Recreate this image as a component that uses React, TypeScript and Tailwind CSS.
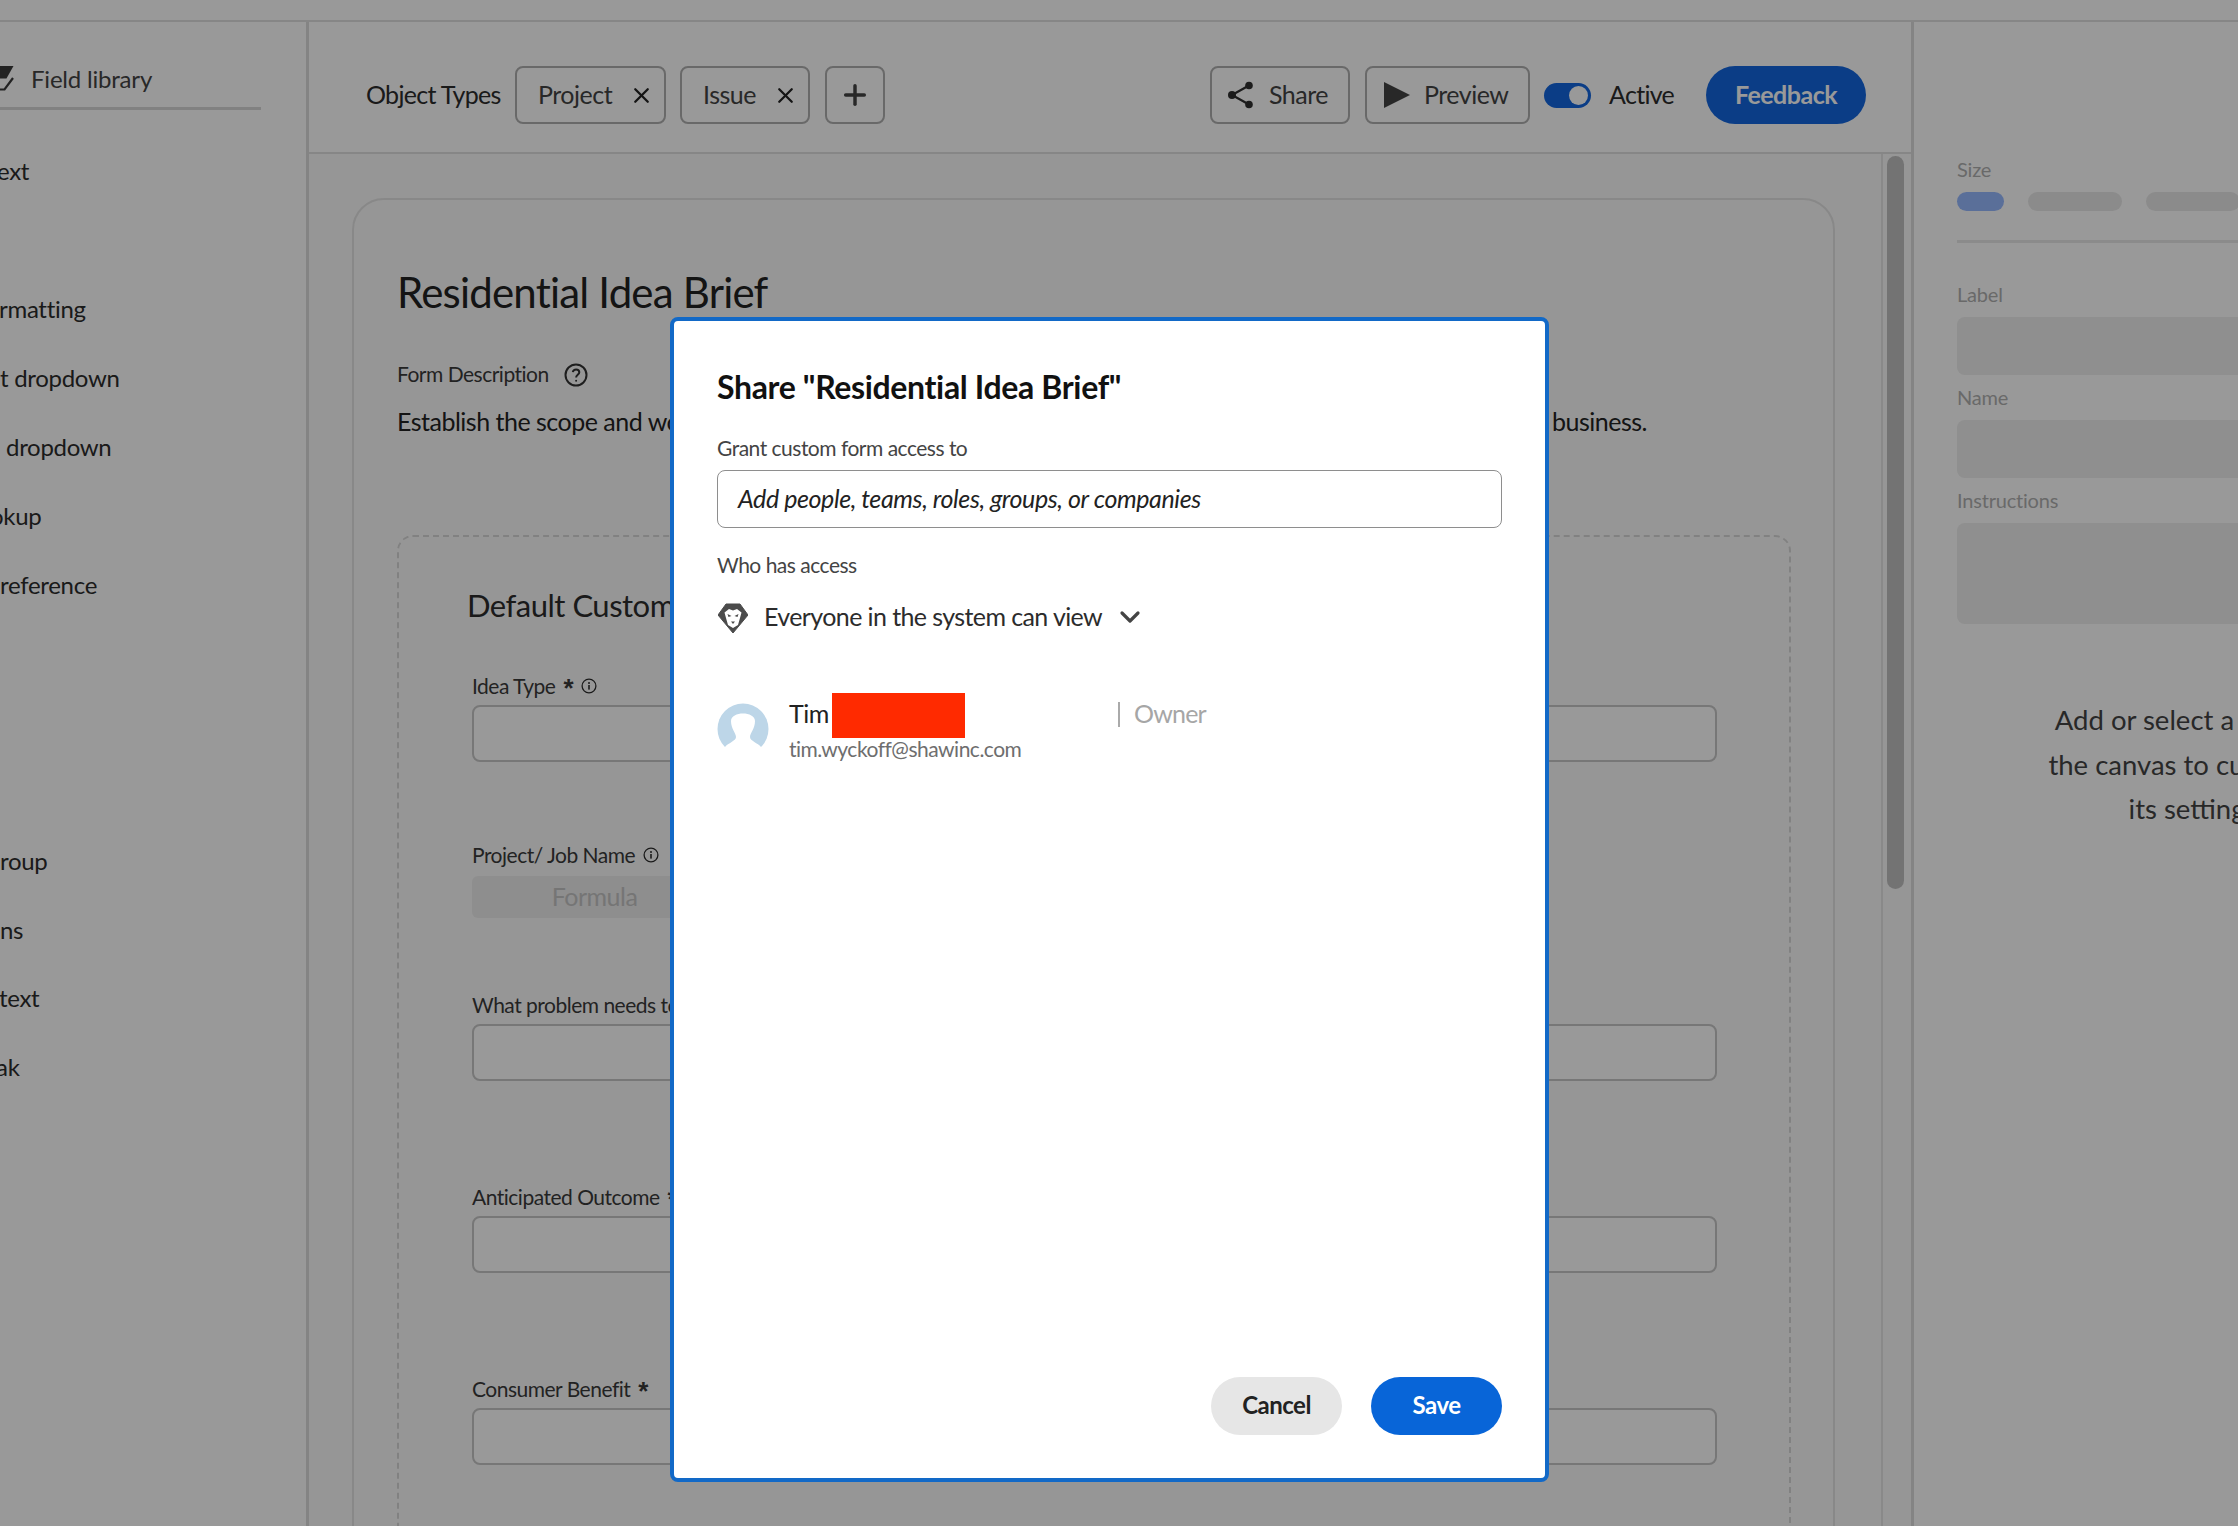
import React from "react";
import { X, Plus, ChevronDown } from "lucide-react";

function InfoIcon() {
  return (
    <svg viewBox="0 0 16 16" className="w-[16px] h-[16px] shrink-0">
      <circle cx="8" cy="8" r="6.9" fill="none" stroke="#2c2c2c" strokeWidth="1.3" />
      <rect x="7.2" y="7" width="1.6" height="4.6" fill="#2c2c2c" />
      <circle cx="8" cy="4.9" r="1" fill="#2c2c2c" />
    </svg>
  );
}

function Star() {
  return <span className="font-['Liberation_Sans',sans-serif] text-[26px] leading-none font-bold mt-[4px]">*</span>;
}

function LionBadge() {
  return (
    <svg viewBox="0 0 30 30" className="w-[30px] h-[30px] shrink-0">
      <path d="M8 1 L22 1 L30 12 L15 30 L0 12 Z" fill="#4b4b4b" stroke="#4b4b4b" strokeLinejoin="round" />
      <path d="M6.5 9.5 L11 6 L15 7.5 L19 6 L23.5 9.5 L22 15 L20 22 L15 25 L10 22 L8 15 Z" fill="#fff" />
      <path d="M9.5 11 L13.5 13 L10.5 14 Z M20.5 11 L16.5 13 L19.5 14 Z M13 18.5 L17 18.5 L15 21 Z" fill="#4b4b4b" />
    </svg>
  );
}

function ShareIcon() {
  return (
    <svg viewBox="0 0 28 28" className="w-[28px] h-[28px] shrink-0" fill="#2f2f2f">
      <circle cx="5" cy="14" r="4" />
      <circle cx="22" cy="4.5" r="3.8" />
      <circle cx="22" cy="23.5" r="3.8" />
      <path d="M5 14 L22 4.5 M5 14 L22 23.5" stroke="#2f2f2f" strokeWidth="2.2" fill="none" />
    </svg>
  );
}

function SideItem({ text, top }: { text: string; top: string }) {
  return <div className={`text-[24px] leading-[30px] text-[#2c2c2c] whitespace-nowrap tracking-[-0.3px] ${top}`}>{text}</div>;
}

function Field({ label, extra, mt }: { label: string; extra?: React.ReactNode; mt: string }) {
  return (
    <div className={mt}>
      <div className="flex items-center gap-[8px] h-[24px] pb-[2px] text-[21px] text-[#3a3a3a] whitespace-nowrap">
        <span>{label}</span>
        {extra}
      </div>
      <div className="mt-[6px] h-[57px] rounded-[8px] border-2 border-[#c6c6c6] bg-white" />
    </div>
  );
}

export default function App() {
  return (
    <div className="relative w-[2238px] h-[1526px] overflow-hidden bg-white tracking-[-0.5px] font-['Lato','Noto_Sans',sans-serif]">
      <div className="h-[22px] border-b-2 border-[#e0e0e0]" />
      <div className="flex h-[1504px]">
        {/* Sidebar */}
        <aside className="w-[309px] shrink-0 border-r-[3px] border-[#dcdcdc]">
          <div className="w-[261px] h-[88px] border-b-[3px] border-[#d8d8d8] relative pl-[31px] pt-[42px]">
            <svg viewBox="0 0 14 26" className="absolute left-0 top-[44px] w-[14px] h-[26px]">
              <path d="M0 0 L13.5 0 L6.5 12.5 L0 12.5 Z" fill="#3a3a3a" />
              <path d="M13 12 L4.5 23.5 L0 23.5" fill="none" stroke="#3a3a3a" strokeWidth="2.2" />
            </svg>
            <div className="text-[24px] leading-[30px] text-[#444] whitespace-nowrap tracking-[-0.2px]">Field library</div>
          </div>
          <SideItem text="ext" top="mt-[46px] -ml-[3px]" />
          <SideItem text="rmatting" top="mt-[108px] -ml-[1px]" />
          <SideItem text="t dropdown" top="mt-[39px]" />
          <SideItem text=" dropdown" top="mt-[39px] pl-[6px]" />
          <SideItem text="okup" top="mt-[39px] -ml-[10px]" />
          <SideItem text="reference" top="mt-[39px]" />
          <SideItem text="roup" top="mt-[246px]" />
          <SideItem text="ns" top="mt-[39px]" />
          <SideItem text="text" top="mt-[38px] -ml-[1px]" />
          <SideItem text="ak" top="mt-[39px] -ml-[4px]" />
        </aside>

        {/* Main */}
        <main className="w-[1602px] shrink-0 flex flex-col">
          <header className="h-[132px] shrink-0 border-b-2 border-[#e0e0e0] flex items-center pt-[16px] pl-[57px] pr-[45px] whitespace-nowrap">
            <span className="text-[25px] text-[#2c2c2c] w-[149px] tracking-[-0.7px]">Object Types</span>
            <button className="h-[58px] w-[151px] rounded-[8px] border-2 border-[#b0b0b0] flex items-center pl-[21px] pr-[10px] justify-between text-[25px] text-[#444]">
              Project <X size={25} strokeWidth={2.2} className="text-[#222]" />
            </button>
            <button className="ml-[14px] h-[58px] w-[130px] rounded-[8px] border-2 border-[#b0b0b0] flex items-center pl-[21px] pr-[10px] justify-between text-[25px] text-[#444]">
              Issue <X size={25} strokeWidth={2.2} className="text-[#222]" />
            </button>
            <button className="ml-[15px] h-[58px] w-[60px] rounded-[8px] border-2 border-[#b0b0b0] flex items-center justify-center text-[#444]">
              <Plus size={32} strokeWidth={2.6} />
            </button>
            <button className="ml-auto h-[58px] w-[140px] rounded-[8px] border-2 border-[#b0b0b0] flex items-center pl-[15px] gap-[14px] text-[25px] text-[#444]">
              <ShareIcon /> Share
            </button>
            <button className="ml-[15px] h-[58px] w-[165px] rounded-[8px] border-2 border-[#b0b0b0] flex items-center pl-[17px] gap-[14px] text-[25px] text-[#444]">
              <svg viewBox="0 0 26 26" className="w-[26px] h-[26px]"><path d="M0 0 L26 13 L0 26 Z" fill="#444" /></svg>
              Preview
            </button>
            <div className="ml-[14px] w-[47px] h-[25px] rounded-full bg-[#1367e0] relative">
              <div className="absolute right-[3px] top-[3px] w-[19px] h-[19px] rounded-full bg-white" />
            </div>
            <span className="ml-[18px] text-[25px] text-[#2c2c2c] w-[97px] tracking-[-0.7px]">Active</span>
            <button className="h-[58px] w-[160px] rounded-full bg-[#1367e0] text-white text-[25px] font-bold">Feedback</button>
          </header>

          <div className="flex flex-1 min-h-0 bg-[#fafafa]">
            <div className="flex-1 min-w-0 pl-[43px] pr-[46px] pt-[44px] overflow-hidden">
              <div className="h-[1400px] rounded-[32px] border-2 border-[#e3e3e3] bg-[#fbfbfb] pl-[43px] pr-[42px] pt-[67px]">
                <h1 className="text-[42px] leading-[50px] text-[#222] whitespace-nowrap tracking-[-0.8px]">Residential Idea Brief</h1>
                <div className="mt-[44px] flex items-center gap-[15px] h-[28px]">
                  <span className="text-[21px] text-[#3a3a3a] mb-[2px]">Form Description</span>
                  <svg viewBox="0 0 24 24" className="w-[24px] h-[24px]" fill="none" stroke="#333" strokeWidth="2">
                    <circle cx="12" cy="12" r="10.5" />
                    <path d="M8.8 9.2c.3-1.8 1.6-2.8 3.3-2.8 1.8 0 3.2 1.1 3.2 2.8 0 2.5-3.2 2.6-3.2 5.2" />
                    <circle cx="12.1" cy="17.8" r="1" fill="#333" stroke="none" />
                  </svg>
                </div>
                <div className="mt-[17px] flex justify-between text-[25px] leading-[30px] text-[#222] whitespace-nowrap pr-[144px]">
                  <span>Establish the scope and workflow of an idea for the</span>
                  <span>business.</span>
                </div>
                <div className="mt-[99px] h-[1100px] rounded-[16px] border-2 border-dashed border-[#d8d8d8] pl-[73px] pr-[72px] pt-[48px]">
                  <h2 className="-ml-[5px] text-[31px] leading-[40px] text-[#2c2c2c] whitespace-nowrap">Default Custom Form</h2>
                  <Field
                    mt="mt-[50px]"
                    label="Idea Type"
                    extra={<><Star /><InfoIcon /></>}
                  />
                  <div className="mt-[82px]">
                    <div className="flex items-center gap-[8px] h-[24px] pb-[2px] text-[21px] text-[#3a3a3a] whitespace-nowrap">
                      <span>Project/ Job Name</span>
                      <InfoIcon />
                    </div>
                    <div className="mt-[8px] h-[42px] w-[245px] rounded-[6px] bg-[#ededed] flex items-center justify-center text-[25px] text-[#c4c4c4]">Formula</div>
                  </div>
                  <Field mt="mt-[76px]" label="What problem needs to be solved?" />
                  <Field mt="mt-[105px]" label="Anticipated Outcome" extra={<Star />} />
                  <Field mt="mt-[105px]" label="Consumer Benefit" extra={<Star />} />
                </div>
              </div>
            </div>
            <div className="w-[30px] shrink-0 border-l-2 border-[#e5e5e5] pt-[2px] pl-[4px]">
              <div className="w-[17px] h-[733px] rounded-full bg-[#c0c0c0]" />
            </div>
          </div>
        </main>

        {/* Right panel */}
        <section className="w-[700px] shrink-0 border-l-[3px] border-[#dcdcdc] pl-[43px] pt-[136px] text-[20px] text-[#b0b0b0]">
          <div className="h-[24px] leading-[22px] tracking-[-0.2px]">Size</div>
          <div className="mt-[10px] flex gap-[24px]">
            <div className="w-[47px] h-[19px] rounded-full bg-[#97b9ff]" />
            <div className="w-[94px] h-[19px] rounded-full bg-[#e8e8e8]" />
            <div className="w-[94px] h-[19px] rounded-full bg-[#e8e8e8]" />
          </div>
          <div className="mt-[29px] border-t-[3px] border-[#e8e8e8]" />
          <div className="mt-[40px] h-[24px] leading-[22px] tracking-[-0.2px]">Label</div>
          <div className="mt-[10px] h-[58px] rounded-[8px] bg-[#eeeeee]" />
          <div className="mt-[11px] h-[24px] leading-[22px] tracking-[-0.2px]">Name</div>
          <div className="mt-[10px] h-[58px] rounded-[8px] bg-[#eeeeee]" />
          <div className="mt-[11px] h-[24px] leading-[22px] tracking-[-0.2px]">Instructions</div>
          <div className="mt-[10px] h-[101px] rounded-[8px] bg-[#eeeeee]" />
          <div className="mt-[74px] w-[472px] text-center text-[27.5px] leading-[44.5px] text-[#444] tracking-normal">
            Add or select a field on
            <br />
            the canvas to customize
            <br />
            its settings
          </div>
        </section>
      </div>

      {/* Backdrop */}
      <div className="absolute inset-0 bg-black/40" />

      {/* Modal */}
      <div className="absolute left-[670px] top-[317px] w-[879px] h-[1165px] rounded-[8px] border-4 border-[#1269c7] bg-white pl-[43px] pr-[43px] flex flex-col">
        <h2 className="mt-[46px] text-[32px] leading-[40px] font-bold text-[#111] whitespace-nowrap tracking-[-0.35px]">Share "Residential Idea Brief"</h2>
        <div className="mt-[28px] text-[21px] leading-[26px] text-[#444]">Grant custom form access to</div>
        <div className="mt-[9px] h-[58px] rounded-[8px] border-[1.5px] border-[#8e8e8e] flex items-center pl-[20px] text-[25px] italic text-[#222] tracking-[-0.4px]">
          Add people, teams, roles, groups, or companies
        </div>
        <div className="mt-[24px] text-[21px] leading-[26px] text-[#444]">Who has access</div>
        <div className="mt-[22px] flex items-center h-[36px] pl-[1px]">
          <LionBadge />
          <span className="ml-[16px] mb-[2px] text-[25px] text-[#2c2c2c] whitespace-nowrap tracking-[-0.6px]">Everyone in the system can view</span>
          <ChevronDown size={32} strokeWidth={2.4} className="ml-[12px] mb-[2px] text-[#444]" />
        </div>
        <div className="mt-[57px] flex">
          <svg viewBox="0 0 52 52" className="w-[52px] h-[52px] shrink-0 mt-[10px]">
            <circle cx="26" cy="26" r="25.5" fill="#bdd6e8" />
            <path d="M14 18 C14 8 38 8 38 18 C38 26 33 30 33 34 C33 38 41 40 44 44 L44 52 L8 52 L8 44 C11 40 19 38 19 34 C19 30 14 26 14 18 Z" fill="#fff" />
          </svg>
          <div className="ml-[20px] w-[329px] shrink-0">
            <div className="flex h-[45px] items-center">
              <span className="text-[25px] leading-[30px] text-[#222] w-[43px] mb-[5px]">Tim</span>
              <div className="w-[133px] h-[45px] bg-[#ff2a00]" />
            </div>
            <div className="mt-[-2px] text-[21px] leading-[26px] text-[#6e6e6e] whitespace-nowrap">tim.wyckoff@shawinc.com</div>
          </div>
          <div className="mt-[9px] h-[25px] border-l-2 border-[#aaaaaa] pl-[14px] text-[25px] leading-[23px] text-[#a6a6a6] tracking-[-0.8px]">Owner</div>
        </div>
        <div className="mt-auto mb-[43px] flex justify-end gap-[29px]">
          <button className="w-[131px] h-[58px] pb-[2px] rounded-full bg-[#e6e6e6] text-[24px] font-bold text-[#222]">Cancel</button>
          <button className="w-[131px] h-[58px] pb-[2px] rounded-full bg-[#0865d8] text-[24px] font-bold text-white">Save</button>
        </div>
      </div>
    </div>
  );
}
